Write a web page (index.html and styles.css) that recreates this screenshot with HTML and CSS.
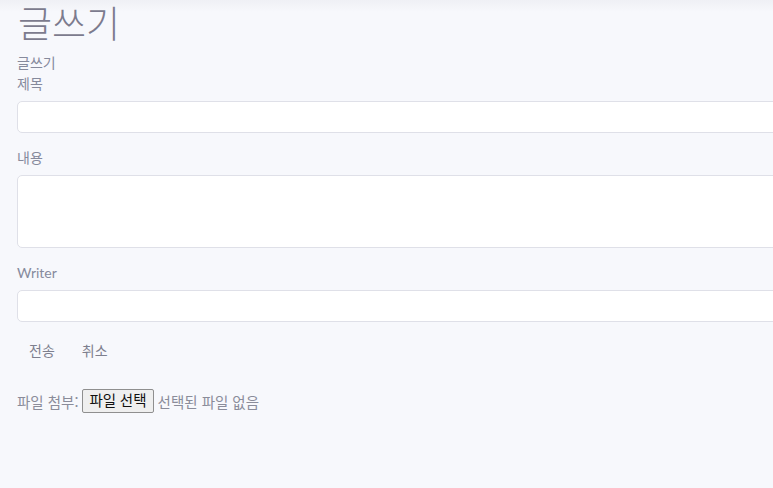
FILE: index.html
```html
<!DOCTYPE html>
<html lang="ko">
<head>
    <meta charset="UTF-8">
    <meta name="viewport" content="width=device-width, initial-scale=1.0">
    <title>글쓰기</title>
    <link rel="stylesheet" href="styles.css">
</head>
<body>
    <div class="container">
        <h1>글쓰기</h1>
        <form class="write-form">
            <div class="legend">글쓰기</div>
            <div class="form-group">
                <label for="title">제목</label>
                <input type="text" id="title" class="form-control">
            </div>
            <div class="form-group">
                <label for="content">내용</label>
                <textarea id="content" class="form-control textarea"></textarea>
            </div>
            <div class="form-group">
                <label for="writer">Writer</label>
                <input type="text" id="writer" class="form-control">
            </div>
            <div class="buttons">
                <button type="submit" class="btn">전송</button>
                <button type="reset" class="btn">취소</button>
            </div>
            <div class="file-row">
                <span>파일 첨부:</span>
                <label class="file-button">파일 선택<input type="file" class="file-hidden"></label>
                <span class="file-name">선택된 파일 없음</span>
            </div>
        </form>
    </div>
</body>
</html>
```

FILE: styles.css
```css
html {
    min-height: 100%;
    background-color: #f7f8fc;
    background-image: linear-gradient(to bottom, #eff0f5 0, #f7f8fc 12px);
    background-repeat: no-repeat;
}
body {
    font-family: Lato, "Noto Sans CJK KR", sans-serif;
    margin: 0;
    padding: 0;
    color: #868a9c;
    overflow: hidden;
}
.container {
    padding: 0 0 0 17px;
    width: 800px;
}
h1 {
    margin: 0;
    padding-top: 0;
    padding-left: 1px;
    font-family: "Noto Sans CJK KR", sans-serif;
    font-weight: 300;
    font-size: 37px;
    line-height: 45px;
    color: #7c7b8e;
}
.legend {
    font-family: "Noto Sans CJK KR", sans-serif;
    font-size: 14px;
    line-height: 21px;
    margin-top: 7px;
}
.form-group {
    margin-bottom: 14px;
}
label {
    display: block;
    font-family: Lato, "Noto Sans CJK KR", sans-serif;
    font-size: 14px;
    line-height: 21px;
    margin-bottom: 7px;
}
.form-control {
    display: block;
    box-sizing: border-box;
    width: 100%;
    height: 32px;
    margin: 0;
    padding: 6px 12px;
    background-color: #fff;
    border: 1px solid #dfe0e8;
    border-radius: 5px;
    font-size: 14px;
    color: #555;
    resize: none;
}
.textarea {
    height: 73px;
}
.buttons {
    display: flex;
    gap: 3px;
    margin-top: -2px;
}
.btn {
    font-family: "Noto Sans CJK KR", sans-serif;
    font-size: 14px;
    line-height: 21px;
    padding: 6px 12px;
    background: none;
    border: none;
    color: #7d7f8e;
    cursor: pointer;
}
.file-row {
    display: flex;
    align-items: center;
    gap: 3px;
    margin-top: 22px;
    font-family: "Noto Sans CJK KR", sans-serif;
    font-size: 14.5px;
    color: #8a8c9a;
}
.file-button {
    display: inline-block;
    margin: 0 1px;
    padding: 0 6px;
    line-height: 22px;
    font-size: 14.5px;
    color: #111;
    background-color: #efefef;
    border: 1px solid #8f8f8f;
    border-radius: 2px;
}
.file-hidden {
    display: none;
}
```
